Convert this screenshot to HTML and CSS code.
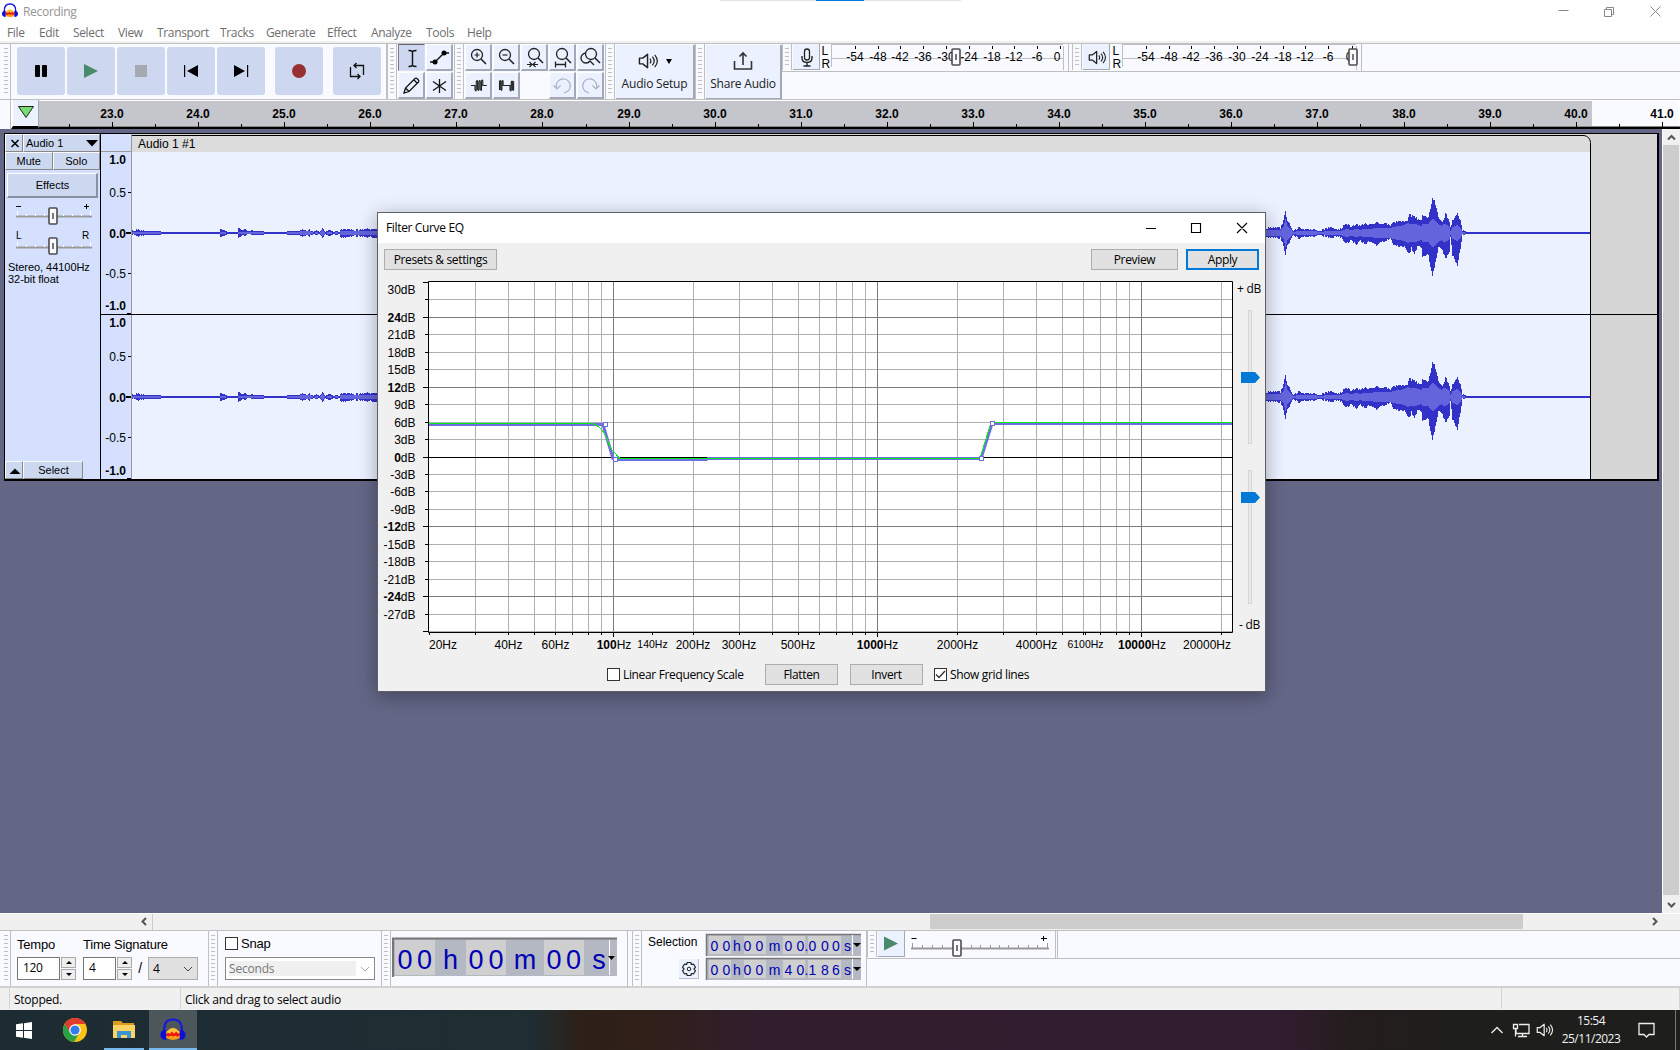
FILE: index.html
```html
<!DOCTYPE html>
<html lang="en">
<head>
<meta charset="utf-8">
<title>Recording</title>
<link rel="stylesheet" href="styles.css">
</head>
<body>
<svg class="defs" width="0" height="0">
  <defs>
    <symbol id="audacity" viewBox="0 0 24 24">
      <path d="M5 13h14v6q-7 4-14 0z" fill="#ff9b17"/><path d="M5 14q7-9 14 0v4H5z" fill="#ffc33c"/>
      <path d="M5 16l2-2 2 1 2-2 2 2 2-2 2 2 2-1v3l-3 1-2-1-2 1-2-1-2 1-3-1z" fill="#f01808"/>
      <path d="M3.500 15V11C3.500 4.500 7 1.500 12 1.500s8.500 3 8.500 9.500v4" fill="none" stroke="#1818d8" stroke-width="2"/>
      <path d="M5.500 11.500v9.500C1.500 21 0 18.500 0 16s1.500-4.500 5.500-4.500zM18.500 11.500v9.500c4 0 5.500-2.500 5.500-5s-1.500-4.500-5.500-4.500z" fill="#0f0fdc"/>
    </symbol>
    <symbol id="speaker" viewBox="0 0 22 18">
      <path d="M1.500 6h3.500l5-4v14l-5-4H1.500z" fill="none" stroke="currentColor" stroke-width="1.500" stroke-linejoin="round"/>
      <path d="M12.500 6.500q2 2.500 0 5M15 4.500q4 4.500 0 9M17.500 2.500q5.500 6.500 0 13" fill="none" stroke="currentColor" stroke-width="1.300"/>
    </symbol>
    <symbol id="thumb" viewBox="0 0 10 18"><rect x="1" y="1" width="8" height="16" rx="1" fill="#fafaff" stroke="#4d4d4d" stroke-width="1.600"/><path d="M5 6v6" stroke="#777" stroke-width="2"/></symbol>
    <symbol id="lens" viewBox="0 0 27 27"><circle cx="12" cy="11" r="5.500" fill="none" stroke="#222" stroke-width="1.300"/><path d="M16 15l5 5" stroke="#222" stroke-width="1.600"/></symbol>
  </defs>
</svg>

<header class="titlebar">
  <svg class="app-icon" width="16" height="16"><use href="#audacity"/></svg>
  <span class="caption">Recording</span>
  <svg class="win-buttons" width="130" height="20"><path d="M8.500 9.500h10M54.500 8.500h7v7h-7zM56.500 8.500v-2h7v7h-2M100.500 5.500l10 10M110.500 5.500l-10 10" fill="none" stroke="#888"/></svg>
  <i class="top-strip"></i>
</header>
<nav class="menubar">
  <span class="m1">File</span><span class="m2">Edit</span><span class="m3">Select</span><span class="m4">View</span><span class="m5">Transport</span><span class="m6">Tracks</span><span class="m7">Generate</span><span class="m8">Effect</span><span class="m9">Analyze</span><span class="m10">Tools</span><span class="m11">Help</span>
</nav>

<section class="dock">
  <i class="grab wide"></i>
  <div class="transport">
    <button><svg viewBox="0 0 48 48"><path d="M18 19q0-1 1-1h3q1 0 1 1v10q0 1-1 1h-3q-1 0-1-1zM25 19q0-1 1-1h3q1 0 1 1v10q0 1-1 1h-3q-1 0-1-1z"/></svg></button>
    <button><svg viewBox="0 0 48 48"><path d="M17 17v14l14-7z" fill="#488a6a"/></svg></button>
    <button><svg viewBox="0 0 48 48"><path d="M18 18h12v12H18z" fill="#a5aab2"/></svg></button>
    <button><svg viewBox="0 0 48 48"><path d="M31 18v12l-11-6zM17 18h1.200v12H17z"/></svg></button>
    <button><svg viewBox="0 0 48 48"><path d="M17 18v12l11-6zM30 18h1.200v12H30z"/></svg></button>
    <button class="rec"><svg viewBox="0 0 48 48"><circle cx="24" cy="24" r="7" fill="#963033"/></svg></button>
    <button class="loop"><svg viewBox="0 0 48 48"><path d="M17.500 20v9.500h9.500M24.500 27l2.500 2.500-2.500 2.500M30.500 28V18.500H21M23.500 16L21 18.500l2.500 2.500" fill="none" stroke="#111" stroke-width="1.300"/></svg></button>
  </div>
  <i class="grab"></i>
  <div class="cells two">
    <b class="on"><svg viewBox="0 0 27 27"><path d="M10.500 6.500q3 0 4 1 1-1 4-1M14.500 7.500v14M10.500 22.500q3 0 4-1 1 1 4 1" fill="none" stroke="#111" stroke-width="1.400"/></svg></b>
    <b><svg viewBox="0 0 27 27"><path d="M4 18h5l9-9h5" fill="none" stroke="#111" stroke-width="1.300"/><circle cx="9" cy="18" r="2.500"/><circle cx="18" cy="9" r="2.500"/></svg></b>
    <b><svg viewBox="0 0 27 27"><path d="M6 21l1.500-5L17 6.500q1-1 2.500.5l.5.500q1.500 1.500.5 2.500L11 19.500zM7.500 16l3.500 3.500M16 8l3.500 3.500" fill="none" stroke="#111" stroke-width="1.300"/></svg></b>
    <b><svg viewBox="0 0 27 27"><path d="M13.500 7v14M7 9.500l13 9M20 9.500l-13 9" stroke="#111" stroke-width="1.300"/></svg></b>
  </div>
  <i class="grab"></i>
  <div class="cells five">
    <b><svg viewBox="0 0 27 27"><use href="#lens"/><path d="M9.500 11h5M12 8.500v5" stroke="#222" stroke-width="1.200"/></svg></b>
    <b><svg viewBox="0 0 27 27"><use href="#lens"/><path d="M9.500 11h5" stroke="#222" stroke-width="1.200"/></svg></b>
    <b><svg viewBox="0 0 27 27"><use href="#lens" x="1" y="-1"/><path d="M6 20.500h4.500M12.500 20.500H17M8.500 18l2.500 2.500L8.500 23M14.500 18L12 20.500l2.500 2.500" fill="none" stroke="#222" stroke-width="1.200"/></svg></b>
    <b><svg viewBox="0 0 27 27"><use href="#lens" x="1" y="-1"/><path d="M6.500 20.500h10M6.500 17.500v6M16.500 17.500v6" fill="none" stroke="#222" stroke-width="1.300"/></svg></b>
    <b><svg viewBox="0 0 27 27"><use href="#lens" x="2" y="-1"/><path d="M9 9a5 5 0 1 0 4 8l4 4" fill="none" stroke="#222" stroke-width="1.300"/></svg></b>
    <b><svg viewBox="0 0 27 27"><path d="M6 13.500h4V18q1.300 2 1.300-.5v-8q1.300-2 1.300.5v7.500q1.300 2 1.300-.5v-7.500q1.300-2 1.300.5v7.500q1.300 2 1.300-.5v-8q1.300-2 1.300.5v4h4" fill="none" stroke="#222" stroke-width="1.100"/></svg></b>
    <b><svg viewBox="0 0 27 27"><path d="M6.500 18V9.500q1.200-2 1.200.5v7.500q1.200 2 1.200-.5V9.500q1.200-2 1.200.5v3.500H17V18q1.200 2 1.200-.5V10q1.200-2 1.200.5v7q1.200 2 1.200-.5V9" fill="none" stroke="#222" stroke-width="1.100"/></svg></b>
    <b class="none"></b>
    <b class="dim"><svg viewBox="0 0 27 27"><path d="M8 17a7 7 0 1 1 11 2l-4 2M4.500 13.500L8 17l3.500-3.500" fill="none" stroke="#aab1bf" stroke-width="1.200"/></svg></b>
    <b class="dim"><svg viewBox="0 0 27 27"><path d="M19 17a7 7 0 1 0-11 2l4 2M22.500 13.500L19 17l-3.500-3.500" fill="none" stroke="#aab1bf" stroke-width="1.200"/></svg></b>
  </div>
  <i class="grab"></i>
  <div class="big setup"><svg width="60" height="24" viewBox="0 0 60 24"><use href="#speaker" x="13" y="3" width="21" height="18"/><path d="M41 10h6l-3 5z"/></svg><span>Audio Setup</span></div>
  <i class="grab"></i>
  <div class="big share"><svg width="24" height="24" viewBox="0 0 24 24"><path d="M3.500 12v8h17v-8M12 16V4.500M8.500 7.500L12 4l3.500 3.500" fill="none" stroke="#333" stroke-width="1.600"/></svg><span>Share Audio</span></div>
  <div class="meters">
    <div class="meter-row">
      <i class="grab short"></i>
      <b class="mbtn"><svg width="27" height="26" viewBox="0 0 27 26"><rect x="11.500" y="5" width="5" height="11" rx="2.500" fill="none" stroke="#222" stroke-width="1.300"/><path d="M9 12v2q0 4.500 5 4.500T19 14v-2M14 18.500V22M10.500 22h7" fill="none" stroke="#222" stroke-width="1.400"/></svg></b>
      <svg class="meter" id="meter-in" width="252" height="27" viewBox="820 44 252 27"></svg>
      <i class="grab short alt"></i>
      <b class="mbtn"><svg width="27" height="26" viewBox="0 0 27 26" color="#222"><use href="#speaker" x="5" y="5" width="19" height="17"/></svg></b>
      <svg class="meter" id="meter-out" width="254" height="27" viewBox="1110 44 254 27"></svg>
    </div>
  </div>
</section>

<section class="timeline">
  <i class="pin-gap"></i><b class="pin"><svg width="26" height="24"><path d="M5.500 4.500h15l-7.500 11z" fill="#76dd76" stroke="#222"/></svg></b>
  <svg id="ruler" width="1641" height="29" viewBox="39 100 1641 29"></svg>
</section>

<main class="workspace">
  <div class="tracks">
    <article class="track">
      <aside class="panel">
        <div class="prow head"><b><svg width="17" height="16"><path d="M5.500 5l7 7M12.500 5l-7 7" stroke="#000" stroke-width="1.500"/></svg></b><b class="name">Audio 1<svg width="12" height="7"><path d="M0 0h12L6 6.500z"/></svg></b></div>
        <div class="prow"><b class="half">Mute</b><b class="half">Solo</b></div>
        <b class="fx">Effects</b>
        <svg width="94" height="54" viewBox="5 201 94 54">
          <path d="M16 206.500h5M84 206.500h5M86.500 204v5" stroke="#000" fill="none"/>
          <path id="gain" d="M16 216.500h76" stroke="#999" stroke-width="2"/><path d="M17.500 211v4.500M26.500 214v2M35.500 214v2M44.500 214v2M63.500 214v2M72.500 214v2M81.500 214v2M90.500 211v4.500" stroke="#fff"/>
          <use href="#thumb" x="48" y="207" width="10" height="18"/>
          <text x="16" y="239">L</text><text x="82" y="239">R</text>
          <path d="M16 247.500h76" stroke="#999" stroke-width="2"/><path d="M17.500 242v4.500M26.500 245v2M35.500 245v2M44.500 245v2M63.500 245v2M72.500 245v2M81.500 245v2M90.500 242v4.500" stroke="#fff"/>
          <use href="#thumb" x="48" y="237" width="10" height="18"/>
        </svg>
        <p>Stereo, 44100Hz<br>32-bit float</p>
        <div class="prow foot"><b><svg width="17" height="16"><path d="M3.500 12h11L9 6.500z"/></svg></b><b class="sel">Select</b></div>
      </aside>
      <svg id="wave" width="1557" height="348" viewBox="101 133 1557 348"></svg>
    </article>
  </div>
  <div class="vscroll"><svg width="17" height="16"><path d="M5 10.500l3.500-3.500 3.500 3.500" fill="none" stroke="#555" stroke-width="2"/></svg><i></i><svg width="17" height="18"><path d="M5 8l3.500 3.500L12 8" fill="none" stroke="#555" stroke-width="2"/></svg></div>
</main>
<div class="hscroll"><svg width="153" height="16"><path d="M146 4l-3.500 3.500 3.500 3.500" fill="none" stroke="#555" stroke-width="2"/><path d="M152.500 0v16" stroke="#ccc"/></svg><i></i><svg class="right" width="20" height="16"><path d="M8 4l3.500 3.500L8 11" fill="none" stroke="#555" stroke-width="2"/></svg></div>

<section class="dock bottom">
  <i class="grab wide"></i>
  <div class="tempo">
    <label class="t1">Tempo<span class="row"><em class="field w43">120</em><i class="spin"><u></u><u></u></i></span></label>
    <label>Time Signature<span class="row"><em class="field w33">4</em><i class="spin"><u></u><u></u></i><s>/</s><em class="combo">4<svg width="10" height="6"><path d="M1 1l4 4 4-4" fill="none" stroke="#444"/></svg></em></span></label>
  </div>
  <i class="grab"></i>
  <div class="snap"><label><i class="check"></i>Snap</label><em class="dis"><span>Seconds</span><svg width="10" height="6"><path d="M1 1l4 4 4-4" fill="none" stroke="#aaa"/></svg></em></div>
  <i class="grab"></i>
  <svg class="time" width="241" height="56" viewBox="391 931 241 56">
    <path d="M393 938h224v38H393z" fill="#b4b8c2"/><path d="M395 940h40v35h-40zM466 940h40v35h-40zM544 940h40v35h-40z" fill="#cfcfcf"/>
    <path d="M393 977v-38.500h224" fill="none" stroke="#777" stroke-width="2"/><path d="M609.500 940v35" stroke="#fff"/><path d="M608 956h7l-3.500 4z"/><path d="M627.500 931v56" stroke="#c0c0c0"/>
    <g class="lcd big-lcd"><text x="405" y="969">0</text><text x="424.500" y="969">0</text><text x="450.500" y="969">h</text><text x="476" y="969">0</text><text x="496" y="969">0</text><text x="525" y="969">m</text><text x="554" y="969">0</text><text x="573.500" y="969">0</text><text x="599" y="969">s</text></g>
  </svg>
  <i class="grab"></i>
  <div class="selbar">
    <div class="sel-label"><span>Selection</span><b><svg width="20" height="20" viewBox="0 0 20 20"><path d="M8.200 3.500h3.600l.6 2 2.200-.3 1.900 3-1.500 1.800 1.500 1.800-1.900 3-2.200-.3-.6 2H8.200l-.6-2-2.200.3-1.900-3L5 10 3.500 8.200l1.900-3 2.200.3z" fill="none" stroke="#222" stroke-width="1.200" stroke-linejoin="round"/><circle cx="10" cy="10" r="1.800" fill="none" stroke="#222"/></svg></b></div>
    <svg class="lcds" width="157" height="56" viewBox="704 931 157 56">
      <g id="lcd-a"></g><g id="lcd-b"></g>
    </svg>
  </div>
  <div class="playspeed"><div class="ps-row">
    <i class="grab short"></i>
    <b class="mbtn"><svg width="27" height="25"><path d="M6 5.500v14l14-7z" fill="#488a6a"/></svg></b>
    <svg width="153" height="27" viewBox="905 931 153 27">
      <path d="M911.500 938.500h5M1041 938.500h6M1043.500 936v5" stroke="#000"/><path d="M911 948.500h138" stroke="#999" stroke-width="2"/>
      <path d="M912.500 943v5M922.500 945v3M932.500 945v3M942.500 945v3M971.500 945v3M980.500 945v3M990.500 945v3M999.500 945v3M1008.500 945v3M1018.500 945v3M1028.500 945v3M1037.500 945v3M1047.500 943v5" stroke="#999"/>
      <use href="#thumb" x="952" y="939" width="10" height="18"/><path d="M1055.500 931v27M1057.500 931v27" stroke="#c0c0c0"/>
    </svg>
  </div></div>
</section>
<footer class="status"><span>Stopped.</span><span class="hint">Click and drag to select audio</span><span class="rest"></span></footer>
<section class="taskbar">
  <span class="tb start"><svg width="17" height="17"><path d="M0 2.300L7 1.300V8H0zM8 1.200L16 0v8H8zM0 9h7v6.700l-7-1zM8 9h8v8l-8-1.200z" fill="#fff"/></svg></span>
  <span class="tb chrome"><svg width="24" height="24" viewBox="0 0 24 24"><circle cx="12" cy="12" r="12" fill="#fbc117"/><path d="M1.600 6A12 12 0 0 1 22.400 6H12L7 15z" fill="#e33b2e"/><path d="M1.600 6A12 12 0 0 0 11 24l5.500-9.500L7 14z" fill="#27a147"/><circle cx="12" cy="12" r="5.800" fill="#fff"/><circle cx="12" cy="12" r="4.600" fill="#347de8"/></svg></span>
  <span class="tb run"><svg width="22" height="20" viewBox="0 0 22 20"><path d="M0 1h8l2 2h11v4H0z" fill="#d99b1a"/><path d="M0 5h22v13H0z" fill="#fbd364"/><path d="M4 18v-7h14v7h-4v-3H8v3z" fill="#3c93d2"/></svg></span>
  <span class="tb run active"><svg width="26" height="25"><use href="#audacity"/></svg></span>
  <svg class="tray" width="72" height="40" viewBox="1486 1010 72 40"><path d="M1491.500 1033l5.500-5.500 5.500 5.500M1519 1024.500h10v9h-13v-4M1513.500 1024.500h4v4h-4zM1515.500 1028.500v8M1522.500 1033.500v3M1518 1036.500h9" fill="none" stroke="#eee" stroke-width="1.300"/><g color="#eee"><use href="#speaker" x="1536" y="1022" width="18" height="16"/></g></svg>
  <span class="clock">15:54<br>25/11/2023</span>
  <svg class="note" width="18" height="18"><path d="M1 2.500h15v11h-5l-2.500 2.500-2.500-2.500H1z" fill="none" stroke="#eee" stroke-width="1.300"/></svg>
  <i class="peek"></i>
</section>

<section class="dialog">
  <header><span>Filter Curve EQ</span><svg width="110" height="20"><path d="M6 10.500h10M51.500 5.500h9v9h-9zM97 5l10 10M107 5L97 15" fill="none" stroke="#000" stroke-width="1.100"/></svg></header>
  <div class="actions"><button class="w113">Presets &amp; settings</button><i></i><button class="w87">Preview</button><button class="w73 primary">Apply</button></div>
  <svg id="eq" width="887" height="386" viewBox="378 272 887 386"></svg>
  <div class="options"><label><i class="check"></i>Linear Frequency Scale</label><button class="w73 flat">Flatten</button><button class="w73">Invert</button><label><i class="check"><svg width="11" height="11"><path d="M1 5.500l3 3L10 2" fill="none" stroke="#333" stroke-width="1.400"/></svg></i>Show grid lines</label></div>
</section>
<script src="script.js"></script>
</body>
</html>
```
FILE: styles.css
```css
* { box-sizing: border-box; }
body { margin: 0; width: 1680px; height: 1050px; overflow: hidden; background: #f0f0f0; font: 12px/16px "Open Sans", sans-serif; letter-spacing: -0.35px; color: #000; display: flex; flex-direction: column; position: relative; }
svg { display: block; flex: none; }
svg text { font-family: "Liberation Sans", sans-serif; letter-spacing: 0; }
b, em, i, u, s { font-weight: normal; font-style: normal; text-decoration: none; }
button { font: inherit; letter-spacing: inherit; padding: 0; }
.defs { position: absolute; }

.titlebar { height: 22px; background: #fff; display: flex; align-items: center; padding-left: 2px; position: relative; }
.app-icon { margin-right: 5px; }
.caption { color: #949494; flex: 1; padding-top: 1px; letter-spacing: -0.3px; }
.win-buttons { margin-right: 0; }
.top-strip { position: absolute; left: 720px; top: 0; width: 241px; height: 1px; background: linear-gradient(90deg, #e2e2e2 96px, #0078d7 96px 144px, #e2e2e2 144px); }
.menubar { height: 21px; background: #fff; border-bottom: 2px solid #f0f0f0; display: flex; padding-left: 7px; color: #6d6d6d; line-height: 21px; }
.menubar span { white-space: nowrap; }
.m1 { width: 32px; } .m2 { width: 34px; } .m3 { width: 45px; } .m4 { width: 39px; } .m5 { width: 63px; } .m6 { width: 46px; }
.m7 { width: 61px; } .m8 { width: 44px; } .m9 { width: 55px; } .m10 { width: 41px; }

.dock { height: 57px; background: #f9faff; border-top: 1px solid #c0c0c0; border-bottom: 1px solid #c0c0c0; display: flex; }
.grab { width: 10px; flex: none; border-right: 1px solid #c0c0c0; border-left: 1px solid #c0c0c0; padding: 4px 2px; background: repeating-linear-gradient(#c0c0c0 0 1px, transparent 1px 4px) content-box; }
.grab.wide { width: 11px; border-left: 0; padding-left: 4px; }
.grab.short { height: 26px; }
.transport { width: 376px; display: flex; gap: 2px; padding: 3px 0 0 6px; border-right: 1px solid #c0c0c0; }
.transport button { width: 48px; height: 48px; border: 0; border-radius: 3px; background: #cdd8f0; }
.transport svg { width: 48px; height: 48px; }
.transport .rec, .transport .loop { margin-left: 8px; }
.cells { display: grid; gap: 1px; grid-auto-rows: 27px; padding-left: 1px; }
.cells.two { grid-template-columns: 27px 27px; width: 57px; }
.cells.five { grid-template-columns: repeat(5, 27px); width: 141px; }
.cells b { background: #ebf1ff; border-right: 2px solid #a2a8b8; border-bottom: 2px solid #a2a8b8; border-top: 1px solid #fff; border-left: 1px solid #fff; }
.cells b svg { width: 27px; height: 27px; margin: -1px 0 0 -1px; }
.cells .on { background: #cdd8f0; border: 1px solid #dde; border-top-color: #667; border-left-color: #778; }
.cells .none { visibility: hidden; }
.big { background: #ebf1ff; border-right: 2px solid #a2a8b8; border-bottom: 1px solid #a2a8b8; margin: 1px 0 0 1px; display: flex; flex-direction: column; align-items: center; padding-top: 4px; gap: 3px; font-size: 12px; letter-spacing: -0.2px; white-space: nowrap; color: #222; }
.setup { width: 79px; }
.share { width: 76px; }
.meters { flex: 1; }
.meter-row, .ps-row { display: flex; height: 28px; border-bottom: 1px solid #c0c0c0; }
.mbtn { width: 27px; height: 26px; margin-left: 1px; background: #ebf1ff; border-right: 1px solid #a2a8b8; border-bottom: 1px solid #a2a8b8; flex: none; }
.meter text { font-size: 12px; }

.timeline { height: 29px; display: flex; background: #fff; }
.pin-gap { width: 11px; background: #f9faff; border-right: 1px solid #c0c0c0; }
.pin { width: 28px; background: #ebf1ff; border-left: 2px solid #fff; border-right: 1px solid #a2a8b8; border-bottom: 3px solid #000; padding-top: 2px; }

.workspace { height: 784px; display: flex; background: #636685; }
.tracks { flex: 1; padding: 4px 0 0 4px; }
.track { display: flex; width: 1655px; border-left: 1px solid #000; background: #000; }
.panel { width: 96px; height: 346px; background: #d4e0fe; border-top: 1px solid #000; border-right: 1px solid #000; display: flex; flex-direction: column; font: 11px/12px "Liberation Sans", sans-serif; letter-spacing: 0; }
.prow { display: flex; height: 18px; }
.prow b { border: 1px solid #f8faff; border-right-color: #888; border-bottom-color: #888; background: #ccd8f0; height: 18px; width: 18px; line-height: 16px; }
.prow .name { flex: 1; display: flex; justify-content: space-between; align-items: center; padding: 0 1px 0 2px; }
.prow .half { flex: 1; text-align: center; }
.fx { height: 25px; margin: 3px 2px 3px 2px; border: 1px solid #fff; border-right: 2px solid #8890a4; border-bottom: 2px solid #8890a4; background: #ccd8f0; text-align: center; line-height: 22px; padding-left: 1px; }
.panel text { font-size: 10px; }
.panel p { margin: 6px 0 0 3px; letter-spacing: -0.05px; white-space: nowrap; }
.foot { margin-top: auto; }
.prow .sel { width: 60px; text-align: center; padding-left: 1px; }
#wave text { font-size: 12px; }
.vscroll { width: 18px; background: #f0f0f0; border-left: 1px solid #fff; }
.vscroll i { display: block; height: 750px; width: 16px; background: #cdcdcd; }
.hscroll { height: 17px; border-top: 1px solid #fff; display: flex; }
.hscroll i { margin-left: 777px; width: 593px; height: 15px; background: #cdcdcd; }
.hscroll .right { margin-left: auto; margin-right: 15px; }

.bottom { height: 58px; border-bottom: 2px solid #d0d0d0; }
.tempo { display: flex; width: 197px; padding: 6px 0 0 6px; font: 13px/16px "Liberation Sans", sans-serif; letter-spacing: -0.2px; }
.tempo label { display: block; white-space: nowrap; }
.t1 { width: 66px; }
.row { display: flex; padding-top: 4px; }
.field { height: 23px; background: #fff; border: 1px solid #777; padding: 2px 5px; font: 12px/16px "Open Sans", sans-serif; letter-spacing: -0.4px; }
.w43 { width: 43px; } .w33 { width: 33px; }
.spin { width: 15px; margin-left: 1px; display: grid; gap: 1px; }
.spin u { border: 1px solid #aaa; background: #eee; display: grid; place-items: center; }
.spin u::before { content: ""; border: 3px solid transparent; border-top: 0; border-bottom: 3px solid #000; }
.spin u + u::before { transform: rotate(180deg); }
.row s { width: 16px; text-align: center; font-size: 14px; line-height: 22px; }
.combo { width: 50px; height: 23px; background: #e1e1e1; border: 1px solid #adadad; padding: 2px 4px; font: 12px/18px "Open Sans", sans-serif; display: flex; justify-content: space-between; align-items: center; }
.snap { width: 163px; padding: 6px 0 0 7px; font: 13px/14px "Liberation Sans", sans-serif; letter-spacing: -0.2px; }
.snap label { display: flex; gap: 3px; height: 20px; }
.check { width: 13px; height: 13px; border: 1px solid #333; background: #fff; flex: none; }
.dis { width: 150px; height: 23px; border: 1px solid #888; background: #fff; display: flex; align-items: center; justify-content: space-between; padding: 0 4px 0 3px; color: #777; font: 12px/15px "Open Sans", sans-serif; }
.dis span { width: 127px; background: #f0f0f0; }
.lcd text { fill: #0000b4; text-anchor: middle; font-size: 14px; }
.big-lcd text { font-size: 27px; }
.selbar { display: flex; width: 225px; border-right: 1px solid #c0c0c0; padding-left: 6px; }
.sel-label { width: 57px; padding-top: 4px; font: 12px/14px "Liberation Sans", sans-serif; letter-spacing: 0; }
.sel-label b { display: block; width: 20px; height: 20px; margin: 10px 0 0 31px; background: #ebf1ff; border-right: 1px solid #bbc; border-bottom: 1px solid #bbc; }
.playspeed { flex: 1; }
.status { height: 22px; display: flex; padding-left: 9px; line-height: 24px; letter-spacing: -0.25px; }
.status span { border-left: 1px solid #d4d4d4; padding-left: 4px; width: 171px; margin-bottom: 1px; height: 21px; }
.status .hint { width: 1321px; }
.status .rest { flex: 1; border-right: 1px solid #d4d4d4; }
.taskbar { height: 40px; background: linear-gradient(90deg, #1d2c32 0, #1e2e33 530px, #2d2019 580px, #302019 650px, #321d2e 770px, #321c30 1280px, #241d1d 1350px, #1e1e1c 1450px); display: flex; align-items: center; color: #f2f2f2; }
.tb { width: 48px; height: 40px; display: flex; align-items: center; justify-content: center; margin-left: 2px; }
.tb.start { margin-left: 0; }
.tb.chrome { margin: 0 -1px 0 3px; }
.run { box-shadow: inset 0 -2px #76b9ed; width: 40px; margin: 0 0 0 6px; }
.run.active { width: 48px; margin-left: 5px; background: #4b575b; }
.tray { margin-left: auto; }
.clock { width: 70px; text-align: center; line-height: 18px; margin: 0 12px 0 -2px; letter-spacing: -0.5px; }
.note { margin: 0 19px 0 0; }
.peek { width: 5px; height: 40px; border-left: 1px solid #777; }

.dialog { position: absolute; left: 377px; top: 212px; width: 889px; height: 480px; border: 1px solid #5c5f66; background: #f0f0f0; box-shadow: 0 4px 18px rgba(0,0,0,.33); }
.dialog header { height: 30px; background: #fff; display: flex; align-items: center; justify-content: space-between; padding: 0 15px 0 8px; }
.dialog button { height: 21px; background: #e1e1e1; border: 1px solid #adadad; line-height: 19px; white-space: nowrap; }
.dialog .primary { border: 2px solid #0078d7; line-height: 17px; margin-left: 8px; }
.actions { height: 29px; display: flex; padding: 6px 6px 0; }
.actions i { flex: 1; }
.w113 { width: 113px; } .w87 { width: 87px; } .w73 { width: 73px; }
.options { display: flex; align-items: center; padding: 6px 0 0 229px; height: 27px; }
.options label { display: flex; align-items: center; gap: 3px; width: 158px; white-space: nowrap; line-height: 17px; }
.flat { margin-right: 12px; }
.options button + label { margin-left: 11px; }
#eq text { font-size: 12px; }
#eq .small { font-size: 10.5px; }
#eq .b { font-weight: bold; }
#eq .ui { font-family: "Open Sans", sans-serif; letter-spacing: -0.3px; }
```
FILE: script.js
```js
const put = (id, html) => { document.getElementById(id).innerHTML = html; };
const line = (x1, y1, x2, y2, c) => `<path d="M${x1} ${y1}L${x2} ${y2}" stroke="${c}"/>`;

// level meters
function meter(id, lrX, left, right, ticks, thumb) {
  let s = `<text x="${lrX}" y="54.500">L</text><text x="${lrX}" y="68">R</text>`;
  s += line(left, 44.5, right, 44.5, '#c0c0c0') + line(left + .5, 44, left + .5, 67, '#c0c0c0') + line(left, 58.5, right, 58.5, '#c0c0c0') + line(right + .5, 46, right + .5, 70, '#c0c0c0') + line(right + 5.5, 44, right + 5.5, 71, '#c0c0c0');
  ticks.forEach((x, i) => {
    const t = i === 9 ? '0' : String(-54 + i * 6);
    s += line(x + .5, 46, x + .5, 49, '#000') + `<text x="${i === 9 ? x - 3 : x}" y="61" text-anchor="middle">${t}</text>`;
  });
  put(id, s + `<use href="#thumb" x="${thumb}" y="48" width="10" height="18"/>`);
}
meter('meter-in', 821.5, 831, 1063, [855, 878, 900, 923, 946, 969, 992, 1014, 1037, 1060], 951);
meter('meter-out', 1112.5, 1122, 1356, [1146, 1169, 1191, 1214, 1237, 1260, 1283, 1305, 1328, 1352], 1348);

// time ruler
let r = '<path d="M39 101h1553v25H39z" fill="#c5c5cc"/><path d="M1592 101h86v25h-86z" fill="#f9faff"/><path d="M39 126.500h1641" stroke="#888"/><path d="M39 128h1641" stroke="#000" stroke-width="2"/>';
for (let n = 22.5; n <= 41; n += .5) {
  const x = Math.floor(112.4 + (n - 23) * 86.11) + .5, major = n % 1 === 0;
  r += line(x, major ? 122 : 124, x, 127, '#000');
  if (major) r += `<text x="${x - .5}" y="118" text-anchor="middle" font-size="12" font-weight="bold">${n.toFixed(1)}</text>`;
}
put('ruler', r);

// waveform: x, peak above, peak below, rms
const left = [[132,3,2,1],[138,3,3,1],[148,2,2,1],[160,2,2,1],[161,1,1,0],[219,1,1,0],[220,4,4,1],[223,3,3,1],[227,1,1,0],[237,1,1,0],[238,4,4,1],[242,3,2,1],[262,2,2,1],[265,1,1,0],[286,1,1,0],[287,2,2,1],[298,2,2,1],[302,3,3,2],[310,3,3,2],[313,1,1,0],[316,3,2,1],[319,1,1,0],[322,5,5,3],[325,1,1,0],[329,3,3,1],[333,1,1,0],[336,2,2,1],[339,1,1,0],[340,4,5,2],[348,3,3,2],[355,3,3,2],[368,4,4,2],[380,3,4,2],[900,5,5,3]];
const right = [[1264,5,5,3],[1270,5,4,3],[1276,6,5,3],[1280,5,5,3],[1283,12,12,6],[1285,22,22,14],[1287,12,12,7],[1290,8,8,4],[1293,2,2,1],[1298,5,5,2],[1312,3,3,2],[1320,2,2,1],[1328,5,4,2],[1340,4,4,2],[1346,10,11,4],[1351,6,7,3],[1356,9,12,4],[1360,7,7,3],[1364,9,11,4],[1370,8,8,4],[1376,10,12,5],[1386,9,7,5],[1391,8,6,5],[1393,11,12,6],[1404,12,14,8],[1407,13,20,10],[1409,20,21,9],[1411,17,15,9],[1414,17,21,9],[1418,13,12,8],[1421,14,16,7],[1422,17,23,9],[1428,16,22,9],[1430,24,34,12],[1432,34,42,14],[1434,32,34,13],[1438,17,15,9],[1441,11,15,7],[1443,12,20,9],[1445,20,25,9],[1449,12,20,6],[1450,6,4,2],[1452,12,22,6],[1457,20,33,8],[1460,12,15,5],[1462,3,2,1],[1466,1,1,0],[1590,1,1,0]];
function shape(points, x0, x1, cy) {
  let peaks = '', rms = '', seed = 7;
  for (let x = x0; x < x1; x++) {
    let k = 0; while (k < points.length - 2 && points[k + 1][0] <= x) k++;
    const a = points[k], b = points[k + 1], f = (x - a[0]) / (b[0] - a[0]);
    seed = (seed * 137 + 29) % 251;
    const v = i => a[i] + (b[i] - a[i]) * f, j = v(1) > 2.5 ? (seed % 3) * .8 - .8 : 0;
    const u = Math.max(1, Math.round(v(1) + j)), d = Math.max(1, Math.round(v(2) + j)), m = Math.round(v(3));
    peaks += `M${x + .5} ${cy - u}V${cy + d}`;
    if (m > 0) rms += `M${x + .5} ${cy - m}V${cy + m}`;
  }
  return `<path d="${peaks}" stroke="#3232c8"/><path d="${rms}" stroke="#6464dc"/>`;
}
let w = '<path d="M101 134h1556v345H101z" fill="#d6d6d6"/><path d="M101 134h31v345h-31z" fill="#d4e0fe"/><path d="M132 135h1452q6 1 7 7v337H132z" fill="#ebf1ff"/><path d="M132 135h1452q5 1 6 7v10H132z" fill="#dcdcdc"/><path d="M132 135.500h1452q6 1 6.500 7V479" fill="none" stroke="#000"/><path d="M101 151.500h31M131.500 134v345" stroke="#999" fill="none"/><path d="M101 314.500h1556M127 313.500h4M127 478.500h4" stroke="#000"/><text x="138" y="148">Audio 1 #1</text>';
for (const [cy, ys] of [[233, [163.5, 196.5, 237.5, 278, 310]], [397, [326.5, 360.5, 401.5, 442, 474.5]]]) {
  ['1.0', '0.5', '0.0', '-0.5', '-1.0'].forEach((t, i) => {
    w += `<text x="126" y="${ys[i]}" text-anchor="end"${i % 2 ? '' : ' font-weight="bold"'}>${t}</text>`;
  });
  w += line(128, cy - 40.5, 131, cy - 40.5, '#000') + line(128, cy + 40.5, 131, cy + 40.5, '#000') + `<path d="M126 ${cy}h5" stroke="#000" stroke-width="2"/>`;
  w += shape(left, 132, 400, cy) + shape(right, 1264, 1590, cy);
}
put('wave', w);

// equaliser graph
const ys = [282,299,317,334,352,369,387,404,422,439,457,474,491,509,526,544,561,579,596,614,631];
let e = '<path d="M428 281h805v351H428z" fill="#fff"/>';
const fx = f => Math.round(613.2 + 264 * Math.log10(f / 100)) + .5;
let vs = '', ticks = '', major = '';
for (let d = 10; d <= 10000; d *= 10) for (let n = 1; n < 10; n++) {
  const f = d * n; if (f < 20 || f > 20000) continue;
  const x = fx(f);
  if (n === 1) major += `M${x} 282V631`; else if (f > 20) vs += `M${x} 282V631`;
  ticks += `M${x} 632v${n === 1 ? 5 : 3}`;
}
ys.forEach((y, i) => {
  const db = 30 - i * 3;
  if (db % 12 === 0) major += `M429 ${y + .5}H1232`; else if (i) vs += `M429 ${y + .5}H1232`;
  ticks += `M${db % 12 === 0 || i === 0 || i === 20 ? 423 : 425} ${y + .5}H428`;
  if (db !== 27 && db !== -30) {
    const n = db % 12 === 0 ? `<tspan class="b">${db}</tspan>` : db;
    e += `<text x="415.500" y="${(i ? y : 289) + 4.5}" text-anchor="end">${n}dB</text>`;
  }
});
ticks += `M${fx(140)} 632v3M${fx(6150)} 632v3`;
e += `<path d="${vs}" stroke="#b0b0b0"/><path d="${major}" stroke="#7c7c7c"/><path d="M429 457.500H1232" stroke="#000"/><path d="${ticks}" stroke="#000"/><path d="M428.500 632.500V281.500H1232.500V632.500Z" fill="none" stroke="#000"/>`;
e += '<path d="M429 424.500H603L613 458.500 616 459.500H706V458.500H981L992 423.500H1232" fill="none" stroke="#6e6ee0" stroke-width="3"/><path d="M614 457.500H707" stroke="#000"/><path d="M429 423.500H590Q600 424 605 435L612 450 620 458.500H980L991 422.500H1232" fill="none" stroke="#00f018" shape-rendering="crispEdges"/>';
for (const [x, y] of [[605.5,424.5],[615.5,459.5],[981.5,458.5],[992.5,423.5]]) e += `<rect x="${x - 2}" y="${y - 2}" width="4" height="4" fill="#fff" stroke="#6e6ee0"/>`;
for (const [x, t, c] of [[443,'20'],[508.5,'40'],[555.5,'60'],[614,'100','b'],[652.5,'140','small'],[693,'200'],[739,'300'],[798,'500'],[877.5,'1000','b'],[957.5,'2000'],[1036.5,'4000'],[1085.5,'6100','small'],[1142,'10000','b'],[1207,'20000']])
  e += c === 'small' ? `<text class="small" x="${x}" y="648" text-anchor="middle">${t}Hz</text>` : `<text x="${x}" y="649" text-anchor="middle"><tspan class="${c || ''}">${t}</tspan>Hz</text>`;
e += '<text class="ui" x="1237" y="293">+ dB</text><text class="ui" x="1239" y="629">- dB</text>';
for (const [a, b] of [[310, 372], [470, 492]]) e += `<rect x="1248.500" y="${a + .5}" width="3" height="133" fill="#e7eaea" stroke="#d6d6d6"/><path d="M1241 ${b}h14l5 5.500-5 5.500h-14z" fill="#0078d7"/>`;
put('eq', e);

// selection start and end
const cells = [713.5,725.5,736,746.5,758.5,773.5,787.5,799.5,805.5,811.5,824,835,846.5];
function lcd(id, y, text) {
  let s = `<path d="M705 ${y}h155v22H705z" fill="#b4b8c2"/><path d="M708 ${y + 2}h22v18h-22zM743 ${y + 2}h22v18h-22zM782 ${y + 2}h22v18h-22zM807 ${y + 2}h33v18h-33z" fill="#cfcfcf"/><path d="M705.500 ${y + 22}V${y + .5}H860" fill="none" stroke="#777" stroke-width="1.500"/><path d="M851.500 ${y + 1}v20" stroke="#fff"/><path d="M852 ${y + 9}h8l-4 4z"/><g class="lcd">`;
  [...text].forEach((c, i) => { s += `<text x="${cells[i]}" y="${y + 17}">${c}</text>`; });
  put(id, s + '</g>');
}
lcd('lcd-a', 934, '00h00m00.000s');
lcd('lcd-b', 958, '00h00m40.186s');
```
